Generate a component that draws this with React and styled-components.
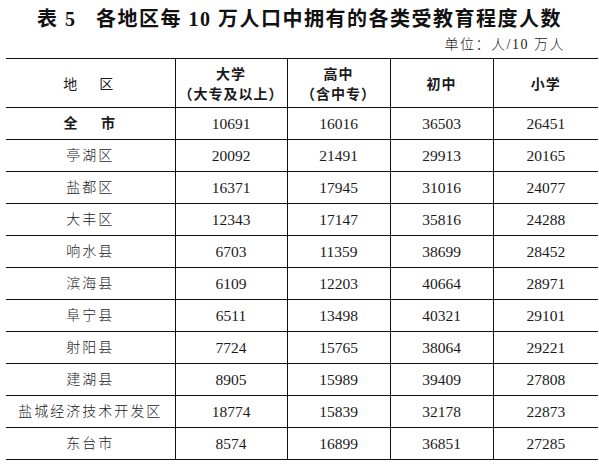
import React from 'react'
import styled, { createGlobalStyle } from 'styled-components'

const GlobalStyle = createGlobalStyle`
  body {
    margin: 0;
    background: #fff;
    color: #111;
    font-family: "Liberation Serif", "Noto Sans CJK SC", serif;
  }
`

const Page = styled.div`
  width: 599px;
  height: 467px;
  padding-top: 6px;
  box-sizing: border-box;
`

const Title = styled.h1`
  margin: 0;
  height: 26px;
  line-height: 26px;
  text-align: center;
  font-size: 20px;
  font-weight: bold;
  letter-spacing: 1.5px;
  white-space: pre;
  font-family: "Liberation Serif", "Noto Sans CJK SC", serif;
`

const Unit = styled.div`
  height: 26px;
  line-height: 26px;
  padding-right: 34px;
  text-align: right;
  font-size: 14px;
  font-weight: 300;
  letter-spacing: 1.5px;
  color: #222;
`

const Table = styled.table`
  margin-left: 6px;
  width: 592px;
  border-collapse: collapse;
  table-layout: fixed;
  border-top: 1.5px solid #111;
`

const Row = styled.tr`
  height: ${(props) => (props.$head ? 49 : 32)}px;
  border-bottom: 1px solid #111;
`

const Cell = styled.td`
  padding: 0;
  text-align: center;
  vertical-align: middle;
  font-size: ${(props) => (props.$num ? 15.5 : 14)}px;
  font-weight: ${(props) => (props.$bold ? 'bold' : 300)};
  letter-spacing: ${(props) => (props.$num ? 0 : 2)}px;
  line-height: 20px;
  white-space: pre;
  color: #1a1a1a;
  & + & {
    border-left: 1px solid #111;
  }
`

const HeadCell = styled(Cell)`
  font-weight: ${(props) => (props.$light ? 'normal' : 'bold')};
  font-family: "Noto Sans CJK SC", sans-serif;
  font-size: 14px;
  letter-spacing: ${(props) => (props.$light ? 4 : 1)}px;
`

const widths = [169, 112, 103, 103, 105]

const rows = [
  ['全\u3000 市', 10691, 16016, 36503, 26451],
  ['亭湖区', 20092, 21491, 29913, 20165],
  ['盐都区', 16371, 17945, 31016, 24077],
  ['大丰区', 12343, 17147, 35816, 24288],
  ['响水县', 6703, 11359, 38699, 28452],
  ['滨海县', 6109, 12203, 40664, 28971],
  ['阜宁县', 6511, 13498, 40321, 29101],
  ['射阳县', 7724, 15765, 38064, 29221],
  ['建湖县', 8905, 15989, 39409, 27808],
  ['盐城经济技术开发区', 18774, 15839, 32178, 22873],
  ['东台市', 8574, 16899, 36851, 27285],
]

export default function App() {
  return (
    <Page>
      <GlobalStyle />
      <Title>表 5   各地区每 10 万人口中拥有的各类受教育程度人数</Title>
      <Unit>单位：人/10 万人</Unit>
      <Table>
        <colgroup>
          {widths.map((w, i) => (
            <col key={i} style={{ width: w }} />
          ))}
        </colgroup>
        <tbody>
          <Row $head>
            <HeadCell $light>地　区</HeadCell>
            <HeadCell>
              大学
              <br />（大专及以上）
            </HeadCell>
            <HeadCell>
              高中
              <br />（含中专）
            </HeadCell>
            <HeadCell>初中</HeadCell>
            <HeadCell>小学</HeadCell>
          </Row>
          {rows.map((r, i) => (
            <Row key={i}>
              <Cell $bold={i === 0}>{r[0]}</Cell>
              {r.slice(1).map((n, j) => (
                <Cell $num key={j}>
                  {n}
                </Cell>
              ))}
            </Row>
          ))}
        </tbody>
      </Table>
    </Page>
  )
}
